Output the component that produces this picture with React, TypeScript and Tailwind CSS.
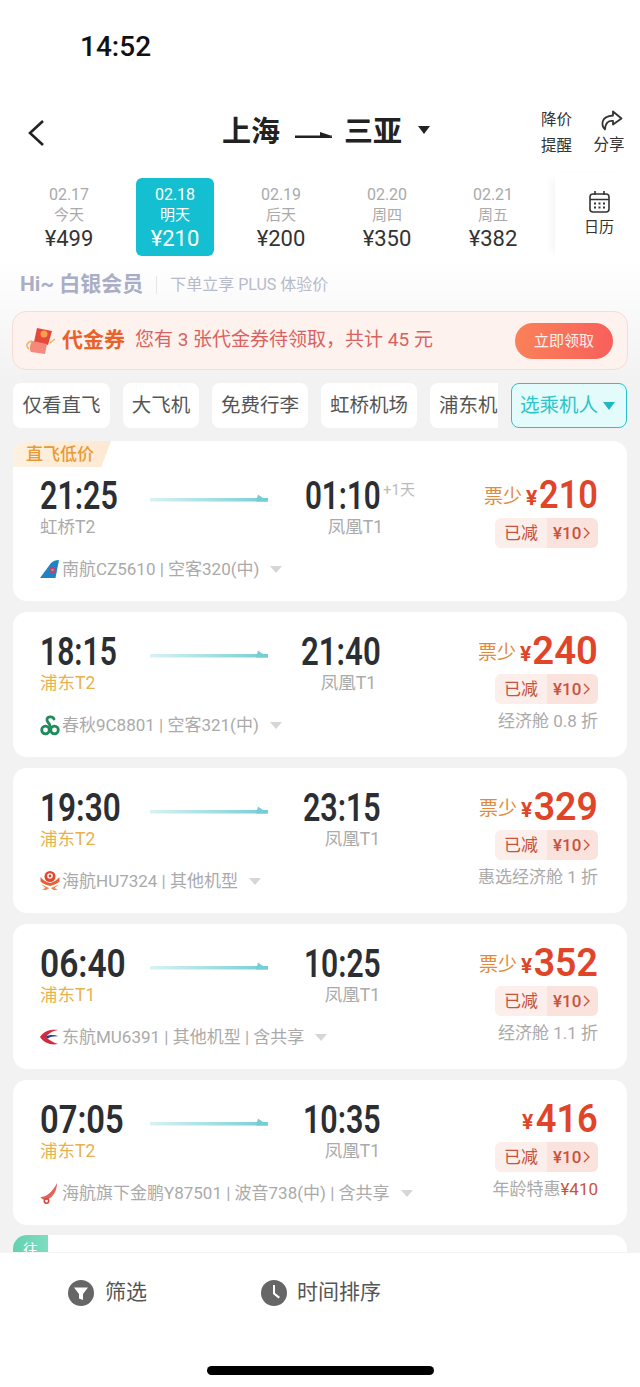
const FONT = "font-['Roboto','Noto_Sans_CJK_SC',sans-serif]";

const dates = [
  { d: "02.17", w: "今天", p: "¥499" },
  { d: "02.18", w: "明天", p: "¥210", active: true },
  { d: "02.19", w: "后天", p: "¥200" },
  { d: "02.20", w: "周四", p: "¥350" },
  { d: "02.21", w: "周五", p: "¥382" },
];

const chips = [
  { t: "仅看直飞", c: "w-[97px]" },
  { t: "大飞机", c: "w-[76px]" },
  { t: "免费行李", c: "w-[96px]" },
  { t: "虹桥机场", c: "w-[96px]" },
];

const CzLogo = () => (
  <svg width="19" height="18" viewBox="0 0 19 18">
    <path d="M0 18 L11 3 Q14 0 19 0 L15.500 18 Z" fill="#1f83c4" />
    <circle cx="12.500" cy="10" r="3.200" fill="#b8476b" />
    <circle cx="12.500" cy="10" r="1.100" fill="#7fb4dc" />
  </svg>
);

const ChunLogo = () => (
  <svg width="20" height="21" viewBox="0 0 20 21" fill="none" stroke="#1f8a5b" strokeWidth="2.800" strokeLinecap="round">
    <path d="M14 4 C13 1.500 8 1 7 4 C6 7 10 8 10 11" />
    <circle cx="5.500" cy="15" r="3.800" />
    <circle cx="14.500" cy="15" r="3.800" />
  </svg>
);

const HuLogo = () => (
  <svg width="20" height="20" viewBox="0 0 20 20">
    <circle cx="10" cy="5.500" r="5.500" fill="#e0482c" />
    <circle cx="10" cy="5" r="2.800" fill="#fff" />
    <circle cx="10" cy="5" r="1.400" fill="#e0482c" />
    <path d="M0.500 6 C3 9.500 7 11 10 12 C13 11 17 9.500 19.500 6 L19.500 10.500 C16.500 13.500 13 14 10 15 C7 14 3.500 13.500 0.500 10.500 Z" fill="#e8603a" />
    <path d="M1.500 13.500 C4.500 15 7 16 9 17 C7 19.500 4 19.500 2 18 C3.500 18 5 17.500 5 16.500 C4 15.500 2.500 15 1.500 13.500 Z M18.500 13.500 C15.500 15 13 16 11 17 C13 19.500 16 19.500 18 18 C16.500 18 15 17.500 15 16.500 C16 15.500 17.500 15 18.500 13.500 Z" fill="#eb8a4a" />
  </svg>
);

const MuLogo = () => (
  <svg width="19" height="18" viewBox="0 0 19 18">
    <path d="M0 9 C4 3 10 1 18 2 C12 3 8 6 6 9 Z" fill="#d22c3c" />
    <path d="M5 9 C9 6.500 14 6.500 19 8.500 C14 8 10 9 8 10.500 Z" fill="#2d3f8f" />
    <path d="M0 9 L6 9 C9 12 13 14.500 18 16 C11 17.500 4 15 0 9 Z" fill="#d22c3c" />
  </svg>
);

const JdLogo = () => (
  <svg width="18" height="21" viewBox="0 0 18 21">
    <path d="M17 0 C17 8 13 15 6 17 C3 17 1 15.500 0.500 14 C7 14 13 8 17 0 Z" fill="#e2635c" />
    <circle cx="6.500" cy="18" r="2.200" fill="none" stroke="#d9483f" strokeWidth="1.600" />
  </svg>
);

const flights = [
  {
    dep: "21:25", arr: "01:10", from: "虹桥T2", to: "凤凰T1", hot: false, first: true,
    air: "南航CZ5610 | 空客320(中)", logo: <CzLogo />, less: true, num: "210",
    numClass: "scale-x-[.88] ml-[-6px]", depClass: "scale-x-[.78]", arrClass: "scale-x-[.76]", extra: "",
    toClass: "w-[115px]",
  },
  {
    dep: "18:15", arr: "21:40", from: "浦东T2", to: "凤凰T1", hot: true,
    air: "春秋9C8801 | 空客321(中)", logo: <ChunLogo />, less: true, num: "240",
    numClass: "scale-x-[.98]", depClass: "scale-x-[.77]", arrClass: "scale-x-[.8]", extra: "经济舱 0.8 折",
    toClass: "w-[113px] pr-[5px]",
  },
  {
    dep: "19:30", arr: "23:15", from: "浦东T2", to: "凤凰T1", hot: true,
    air: "海航HU7324 | 其他机型", logo: <HuLogo />, less: true, num: "329",
    numClass: "scale-x-[.96] ml-[-1px]", depClass: "scale-x-[.81]", arrClass: "scale-x-[.78]", extra: "惠选经济舱 1 折",
    toClass: "w-[113px] pr-[1px]",
  },
  {
    dep: "06:40", arr: "10:25", from: "浦东T1", to: "凤凰T1", hot: true,
    air: "东航MU6391 | 其他机型 | 含共享", logo: <MuLogo />, less: true, num: "352",
    numClass: "scale-x-[.96] ml-[-1px]", depClass: "scale-x-[.86]", arrClass: "scale-x-[.77]", extra: "经济舱 1.1 折",
    toClass: "w-[113px] pr-[1px]",
  },
  {
    dep: "07:05", arr: "10:35", from: "浦东T2", to: "凤凰T1", hot: true,
    air: "海航旗下金鹏Y87501 | 波音738(中) | 含共享", logo: <JdLogo />, less: false, num: "416",
    numClass: "scale-x-[.93] ml-[-2px]", depClass: "scale-x-[.84]", arrClass: "scale-x-[.78]", extra: "年龄特惠¥410",
    toClass: "w-[113px] pr-[1px]",
  },
];

const RouteArrow = () => (
  <svg width="118" height="10" viewBox="0 0 118 10" className="mt-[17px] shrink-0">
    <defs>
      <linearGradient id="arrowFade" x1="0" x2="1" y1="0" y2="0">
        <stop offset="0" stopColor="#d8f2f4" />
        <stop offset="1" stopColor="#74ced4" />
      </linearGradient>
    </defs>
    <rect x="0" y="4" width="118" height="3.500" fill="url(#arrowFade)" />
    <path d="M108 0.500 L118 7.500 L106 7.500 Z" fill="#74ced4" />
  </svg>
);

function FlightCard({ f }: { f: (typeof flights)[number] }) {
  return (
    <div className={`relative overflow-hidden rounded-[14px] bg-white flex justify-between pl-[27px] pr-[29px] shrink-0 ${f.first ? "h-[160px] pt-[36px]" : "h-[145px] pt-[21px]"}`}>
      {f.first && (
        <div className="absolute left-0 top-0 w-[98px] h-[26px] bg-gradient-to-r from-[#fdf1e0] to-[#fde9d2] [clip-path:polygon(0_0,100%_0,90%_100%,0_100%)] pl-[13px] text-[17px] leading-[26px] font-medium text-[#e89a35]">
          直飞低价
        </div>
      )}
      <div className="flex flex-col">
        <div className="flex items-start h-[39px]">
          <div className="w-[110px] h-[39px] text-[39px] leading-[39px] font-semibold text-[#2b2e33] whitespace-nowrap">
            <span className={`inline-block origin-left ${f.depClass}`}>{f.dep}</span>
          </div>
          <RouteArrow />
          <div className="relative w-[113px] h-[39px] flex justify-end text-[39px] leading-[39px] font-semibold text-[#2b2e33] whitespace-nowrap">
            <span className={`inline-block origin-right ${f.arrClass}`}>{f.arr}</span>
            {f.first && (
              <span className="absolute left-[115px] top-[3px] text-[15px] leading-[20px] font-normal text-[#bbbbbb]">+1天</span>
            )}
          </div>
        </div>
        <div className="flex h-[22px] text-[17.500px] leading-[22px]">
          <div className={`w-[110px] ${f.hot ? "text-[#e8b14c]" : "text-[#aaaaaa]"}`}>{f.from}</div>
          <div className="w-[118px]" />
          <div className={`text-right text-[#aaaaaa] whitespace-nowrap ${f.toClass}`}>{f.to}</div>
        </div>
        <div className="flex items-center h-[22px] mt-[20px] text-[17px] leading-[22px] text-[#aaaaaa] whitespace-nowrap">
          <div className="w-[22px] flex items-center shrink-0">{f.logo}</div>
          <span>{f.air}</span>
          <span className="ml-[11px] w-0 h-0 border-x-[6px] border-x-transparent border-t-[7px] border-t-[#d6d6d6]" />
        </div>
      </div>
      <div className="flex flex-col items-end mt-[-1px]">
        <div className="flex items-end justify-end h-[39px] whitespace-nowrap leading-[39px]">
          {f.less && <span className="text-[19px] leading-[36px] text-[#df8a3e] mr-[4px]">票少</span>}
          <span className="text-[21px] leading-[34px] font-bold text-[#e0452a]">¥</span>
          <span className={`inline-block origin-right text-[39px] font-semibold text-[#e0452a] ${f.numClass}`}>{f.num}</span>
        </div>
        <div className="flex h-[30px] mt-[3px] rounded-[6px] overflow-hidden text-[17px] leading-[30px] text-[#c8533d]">
          <div className="w-[52px] bg-[#fbeeeb] text-center">已减</div>
          <div className="w-[51px] bg-[#fbe3dd] flex items-center pl-[6px] font-medium">
            ¥10
            <svg width="7" height="12" viewBox="0 0 7 12" fill="none" stroke="#c8533d" strokeWidth="1.300" className="ml-[2px]">
              <path d="M1 1 L6 6 L1 11" />
            </svg>
          </div>
        </div>
        {f.extra && <div className="mt-[5px] text-[17px] leading-[24px] text-[#aaaaaa] whitespace-nowrap">{f.extra.includes("¥") ? <>年龄特惠<span className="text-[#c8533d]">¥410</span></> : f.extra}</div>}
      </div>
    </div>
  );
}

export default function App() {
  return (
    <div className={`${FONT} w-[640px] h-[1387px] overflow-hidden flex flex-col bg-[#f2f2f2]`}>
      <div className="bg-white shrink-0">
        <div className="h-[95px] pl-[80px] pt-[29px] text-[28px] leading-[36px] font-medium text-[#111111]">14:52</div>
        {/* 标题 */}
        <div className="flex h-[78px] items-start">
          <div className="w-[222px] pl-[27px] pt-[24px] shrink-0">
            <svg width="18" height="28" viewBox="0 0 18 28" fill="none" stroke="#222222" strokeWidth="2.600">
              <path d="M16 2 L3 14 L16 26" />
            </svg>
          </div>
          <div className="w-[319px] flex items-center h-[76px] text-[29px] font-semibold text-[#222222] shrink-0">
            <span>上海</span>
            <svg width="37" height="8" viewBox="0 0 37 8" className="ml-[15px] mr-[12px] mt-[3px]">
              <path d="M0 4.500 H37 V7 H0 Z M25 1 L37 5 L25 6 Z" fill="#222222" />
            </svg>
            <span>三亚</span>
            <span className="ml-[16px] mb-[6px] w-0 h-0 border-x-[6px] border-x-transparent border-t-[8px] border-t-[#222222]" />
          </div>
          <div className="w-[52px] pt-[12px] text-[15.500px] leading-[26px] text-[#333333] shrink-0">
            <div>降价</div>
            <div>提醒</div>
          </div>
          <div className="flex flex-col items-center w-[32px] pt-[15px] text-[15.500px] leading-[26px] text-[#333333] shrink-0">
            <svg width="24" height="21" viewBox="0 0 24 21" fill="none" stroke="#333333" strokeWidth="1.800" strokeLinejoin="round" className="ml-[3px] mb-[1px]">
              <path d="M14 1.500 L22.500 8.500 L14 14.500 V11 C9 10.500 6.500 13 6 19.500 C2 15 1.500 6.500 14 5.500 Z" />
            </svg>
            <div>分享</div>
          </div>
        </div>
        {/* 日期 */}
        <div className="flex h-[85px] pl-[16px] pt-[5px]">
          {dates.map((x) => (
            <div key={x.d} className="w-[106px] flex justify-center shrink-0">
              <div className={`w-[78px] h-[78px] rounded-[6px] flex flex-col items-center pt-[6px] ${x.active ? "bg-[#13bfd0] text-white" : ""}`}>
                <div className={`text-[16px] leading-[21px] ${x.active ? "" : "text-[#aaaaaa]"}`}>{x.d}</div>
                <div className={`text-[15px] leading-[21px] ${x.active ? "" : "text-[#aaaaaa]"}`}>{x.w}</div>
                <div className={`text-[22px] leading-[25px] ${x.active ? "" : "text-[#333333]"}`}>{x.p}</div>
              </div>
            </div>
          ))}
          <div className="w-[85px] ml-[9px] mt-[-5px] h-[85px] flex flex-col items-center pl-[3px] pt-[17px] shadow-[-8px_0_10px_-6px_rgba(0,0,0,0.06)] text-[15px] leading-[22px] text-[#333333]">
            <svg width="21" height="24" viewBox="0 0 21 24" fill="none" stroke="#333333" strokeWidth="1.600" className="mb-[2px]">
              <rect x="1" y="4" width="19" height="18" rx="3" />
              <path d="M1 9.500 H20 M6 1 V5 M15 1 V5" />
              <path d="M5 13.500 H7 M9.500 13.500 H11.500 M14 13.500 H16 M5 17.500 H7 M9.500 17.500 H11.500 M14 17.500 H16" strokeWidth="1.800" />
            </svg>
            <div>日历</div>
          </div>
        </div>
      </div>

      {/* 会员 + 券 + 筛选 */}
      <div className="bg-gradient-to-b from-white to-[#f2f2f2] h-[125px] px-[13px] shrink-0 flex flex-col">
        <div className="flex items-center h-[53px] pl-[7px] shrink-0">
          <span className="text-[21px] font-bold text-[#a9aec6]">Hi~ 白银会员</span>
          <span className="ml-[13px] mr-[13px] w-px h-[18px] bg-[#e6e6ea]" />
          <span className="text-[16px] text-[#b6bac9]">下单立享 PLUS 体验价</span>
        </div>
        <div className="flex items-center h-[59px] rounded-[14px] border border-[#f8dcd3] bg-[#fdf2ee] ml-[-1px] mr-[-1px] pl-[13px] pr-[14px] shrink-0">
          <svg width="30" height="30" viewBox="0 0 30 30" className="shrink-0">
            <path d="M11 2 L26 5 L22 19 L8 16 Z" fill="#e8483c" />
            <circle cx="18" cy="8" r="3.500" fill="#f5a04a" />
            <path d="M6 15 L21 18 L19 28 L5 26 C3 24 4 18 6 15 Z" fill="#f58a7a" />
            <path d="M6 15 C1 16 -1 20 3 23 M24 17 L29 13" stroke="#f2b35a" strokeWidth="1.500" fill="none" />
          </svg>
          <span className="ml-[6px] text-[21px] font-bold text-[#e8622a] whitespace-nowrap">代金券</span>
          <span className="ml-[10px] text-[19px] text-[#d9625f] whitespace-nowrap">您有 3 张代金券待领取，共计 45 元</span>
          <span className="ml-auto w-[98px] h-[36px] rounded-full bg-gradient-to-r from-[#fa8158] to-[#f85f5c] text-white/90 text-[15px] leading-[36px] text-center shrink-0">立即领取</span>
        </div>
      </div>
      <div className="flex items-start h-[54px] px-[13px] shrink-0">
        {chips.map((c) => (
          <div key={c.t} className={`${c.c} h-[45px] mr-[13px] rounded-[8px] bg-white text-center text-[19.500px] leading-[45px] text-[#555555] shrink-0`}>{c.t}</div>
        ))}
        <div className="w-[68px] h-[45px] rounded-l-[8px] bg-white pl-[9px] text-[19.500px] leading-[45px] text-[#555555] whitespace-nowrap shrink-0">浦东机</div>
        <div className="ml-[13px] w-[116px] h-[45px] rounded-[8px] border border-[#27c4cc] bg-[#e4fbfb] flex items-center pl-[8px] text-[19.500px] text-[#2cc5c9] whitespace-nowrap shrink-0">
          选乘机人
          <span className="ml-[5px] w-0 h-0 border-x-[6px] border-x-transparent border-t-[8px] border-t-[#1fb9c4]" />
        </div>
      </div>

      {/* 航班列表 */}
      <div className="flex-1 min-h-0 overflow-hidden px-[13px] pt-[4px] flex flex-col gap-[11px]">
        {flights.map((f) => (
          <FlightCard key={f.air} f={f} />
        ))}
        <div className="relative h-[145px] mt-[-1px] rounded-[14px] bg-white overflow-hidden shrink-0">
          <div className="w-[35px] h-[30px] bg-gradient-to-r from-[#63d1ae] to-[#7fdcc0] text-white text-[15px] text-center leading-[30px]">往</div>
        </div>
      </div>

      {/* 底栏 */}
      <div className="h-[135px] bg-white shrink-0 relative border-t border-[#f4f4f4]">
        <div className="flex items-center h-[79px] pl-[68px] text-[21px] text-[#555555]">
          <svg width="26" height="26" viewBox="0 0 26 26" className="mr-[11px]">
            <circle cx="13" cy="13" r="13" fill="#666666" />
            <path d="M6 7.500 H20 L15 14 V20 L11 18.500 V14 Z" fill="#ffffff" />
          </svg>
          <span>筛选</span>
          <svg width="26" height="26" viewBox="0 0 26 26" className="ml-[114px] mr-[10px]">
            <circle cx="13" cy="13" r="13" fill="#666666" />
            <path d="M12 5 H14 V13 L19 17 L17.500 18.500 L12 14 Z" fill="#ffffff" />
          </svg>
          <span>时间排序</span>
        </div>
        <div className="absolute left-[207px] top-[113px] w-[227px] h-[9px] rounded-full bg-black" />
      </div>
    </div>
  );
}
